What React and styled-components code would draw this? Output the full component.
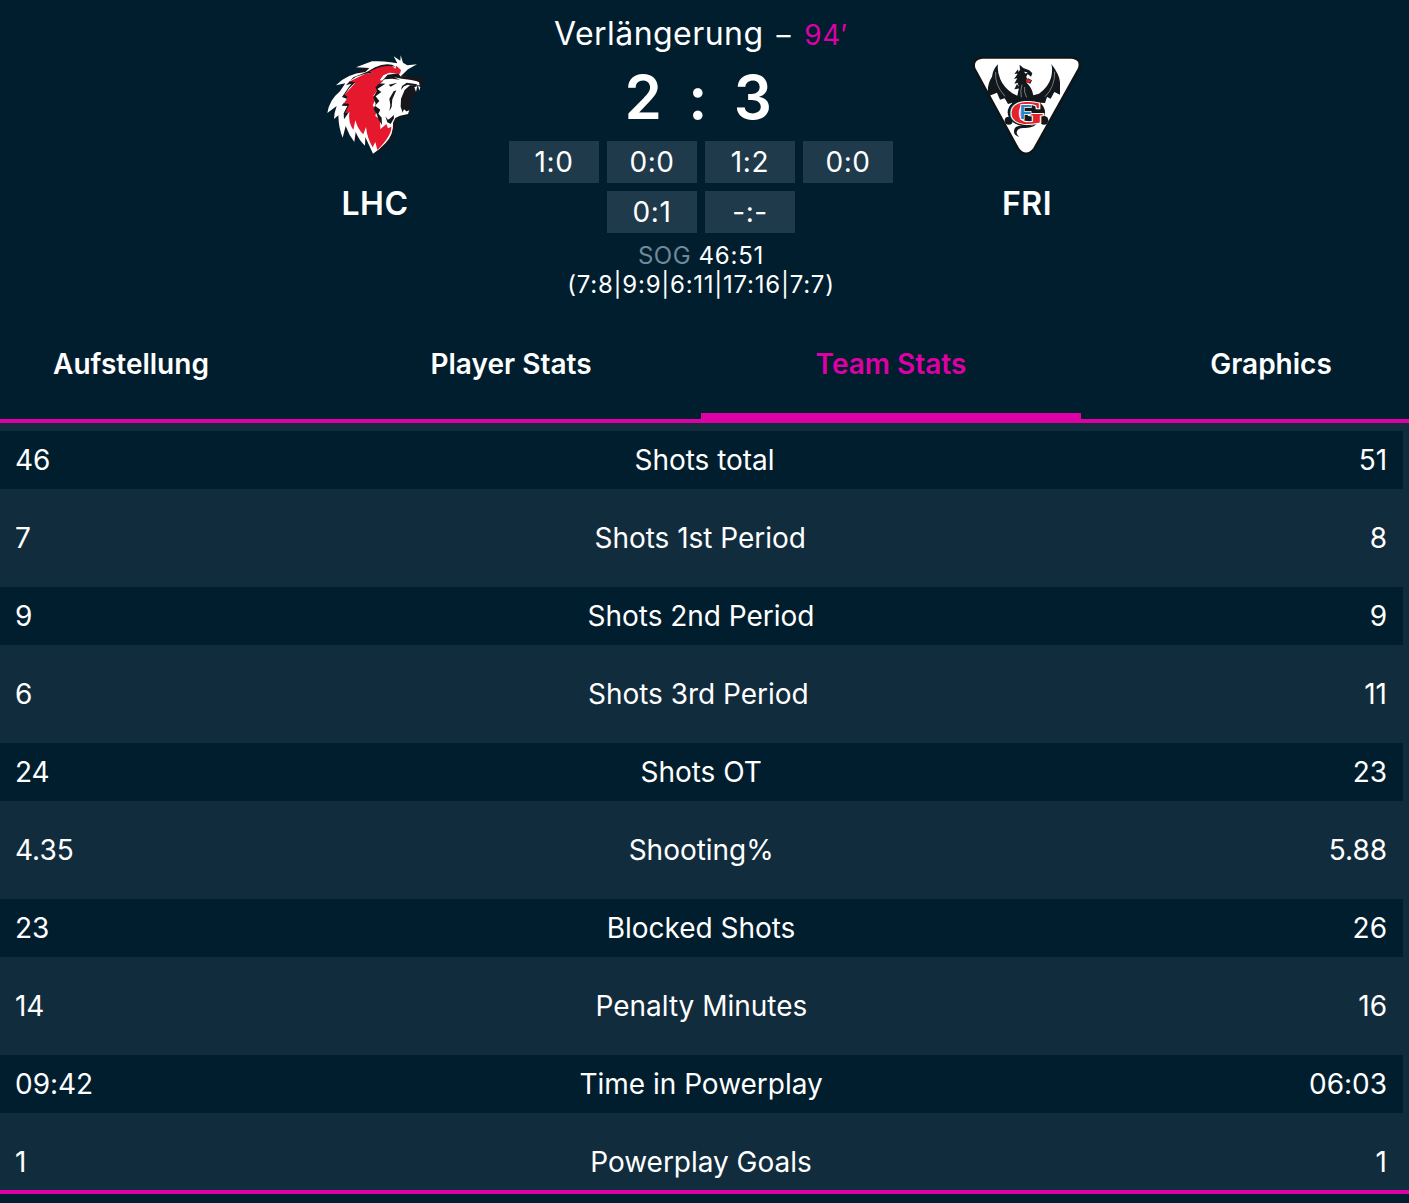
import React from "react";
import styled, { createGlobalStyle } from "styled-components";

const GlobalStyle = createGlobalStyle`
  * { box-sizing: border-box; }
  body { margin: 0; background: #001e2e; overflow: hidden; }
`;

const Page = styled.main`
  width: 1409px;
  height: 1203px;
  overflow: hidden;
  background: #001e2e;
  color: #fff;
  font-family: Inter, "Liberation Sans", sans-serif;
`;

const Header = styled.header`
  display: flex;
  justify-content: center;
  width: 1402px;
  height: 309px;
`;

const Team = styled.section`
  display: flex;
  flex-direction: column;
  align-items: center;
  width: 268px;
  padding-top: 50px;
`;

const Logo = styled.svg`
  display: block;
  flex: none;
  height: 110px;
`;

const TeamName = styled.h2`
  margin: 24px 0 0;
  font-size: 32px;
  font-weight: 600;
  line-height: 40px;
  letter-spacing: 0.5px;
`;

const Summary = styled.section`
  display: flex;
  flex-direction: column;
  align-items: center;
  width: 384px;
`;

const GameStatus = styled.div`
  margin-top: 14px;
  font-size: 32px;
  line-height: 40px;
  letter-spacing: 0.45px;
  white-space: pre;
`;

const Clock = styled.span`
  font-size: 28px;
  letter-spacing: 0.7px;
  word-spacing: 4.4px;
`;

const Minute = styled.span`
  color: #dd00a5;
`;

const Score = styled.div`
  margin-top: 6px;
  font-size: 60px;
  font-weight: 600;
  line-height: 72px;
  letter-spacing: 5.6px;
  white-space: pre;
`;

const Periods = styled.div`
  display: flex;
  flex-wrap: wrap;
  justify-content: center;
  gap: 8px;
  margin-top: 8px;
`;

const Period = styled.span`
  width: 90px;
  height: 42px;
  background: #1f3a4b;
  font-size: 28px;
  line-height: 42px;
  letter-spacing: 0.6px;
  text-align: center;
`;

const Sog = styled.div`
  margin-top: 8px;
  font-size: 24px;
  line-height: 29px;
  letter-spacing: 0.75px;
  text-align: center;
`;

const SogLabel = styled.span`
  color: #6f899b;
  letter-spacing: 0.5px;
`;

const Tabs = styled.nav`
  display: flex;
  justify-content: center;
  width: 1402px;
  height: 110px;
`;

const Tab = styled.button`
  flex: 0 0 380px;
  height: 110px;
  padding: 5px 0 0;
  border: 0;
  border-bottom: 6px solid ${(p) => (p.$active ? "#dd00a5" : "transparent")};
  background: none;
  color: ${(p) => (p.$active ? "#dd00a5" : "#fff")};
  font: 600 28px/34px Inter, "Liberation Sans", sans-serif;
`;

const Panel = styled.section`
  height: 775px;
  padding: 8px 6px 0 0;
  border: solid #dd00a5;
  border-width: 4px 0;
  background: #112c3d;
  overflow: hidden;
`;

const StatRow = styled.div`
  display: flex;
  justify-content: space-between;
  height: 58px;
  margin-bottom: 20px;
  padding: 0 16px 0 15px;
  background: ${(p) => (p.$dark ? "#001e2e" : "transparent")};
  font-size: 28px;
  line-height: 58px;
  letter-spacing: -0.02px;
`;

const periods = ["1:0", "0:0", "1:2", "0:0", "0:1", "-:-"];
const tabs = ["Aufstellung", "Player Stats", "Team Stats", "Graphics"];
const stats = [
  ["46", "Shots total", "51"],
  ["7", "Shots 1st Period", "8"],
  ["9", "Shots 2nd Period", "9"],
  ["6", "Shots 3rd Period", "11"],
  ["24", "Shots OT", "23"],
  ["4.35", "Shooting%", "5.88"],
  ["23", "Blocked Shots", "26"],
  ["14", "Penalty Minutes", "16"],
  ["09:42", "Time in Powerplay", "06:03"],
  ["1", "Powerplay Goals", "1"],
];

function LionLogo() {
  return (
    <Logo width="110" viewBox="0 0 330 330" aria-label="Lausanne HC">
      <path
        fill="#17171b"
        d="M126 54 L190 42 L230 44 L252 64 L262 78 L302 82 L312 90 L308 104 L290 120 L274 152 L273 184 L262 197 L232 210 L226 240 L208 276 L184 302 L161 312 L140 268 L138 290 L112 252 L107 277 L82 235 L71 263 L54 200 L44 208 L56 160 L90 96 Z"
      />
      <path
        fill="#fff"
        d="M108 52 L156 34 Q184 32 212 37 L232 40 L221 19 L241 32 L242 16 L249 38 L262 46 L291 43 L264 58 L246 75 L240 80 L268 81 L297 96 L299 106 L270 106 L254 120 L243 146 L242 170 L248 188 L268 181 L264 192 L240 197 L226 204 L219 218 Q222 252 196 280 Q180 298 159 311 L136 261 L135 287 Q118 272 107 246 L103 276 Q87 256 77 228 L68 263 Q56 236 55 196 L42 207 Q42 190 50 168 L22 189 Q28 150 60 124 L76 100 L48 106 Q78 72 136 66 L148 54 Z"
      />
      <path
        fill="#e5182d"
        d="M90 94 L134 72 L160 68 L144 64 L166 52 Q186 45 216 48 L226 56 L229 47 L243 60 L240 71 L208 68 L190 76 L179 91 L190 92 L168 112 L173 120 L160 137 L167 147 L158 166 L170 182 L166 198 L180 208 L181 238 L199 222 L204 235 L214 230 Q215 257 172 300 L166 276 L158 292 Q142 266 138 231 L130 253 Q114 239 106 211 L100 240 Q84 218 88 186 L74 192 L86 164 L68 165 L84 142 L70 138 L94 112 L106 98 L86 100 Z"
      />
      <g fill="#17171b">
        <path d="M166 52 Q190 39 216 44 L227 50 Q196 45 172 54 L148 65 L160 68 L132 72 L108 80 L88 94 L106 97 L88 114 L74 134 L84 142 L70 160 L88 162 L76 190 L87 186 L72 208 L71 190 L82 168 L65 167 L80 146 L66 141 L86 112 L94 101 L78 106 L100 82 L134 68 L148 62 Z" />
        <path d="M203 74 L235 70 L242 80 L262 79 L300 88 L301 96 L274 90 L246 86 L222 82 L240 89 L216 86 L194 88 L178 100 L196 101 L172 117 L184 126 L167 139 L178 153 L165 167 L181 179 L175 191 L185 203 L186 225 L176 209 L170 192 L161 177 L167 161 L160 142 L171 122 L166 112 L188 91 Z" />
        <path d="M206 104 L232 98 L212 110 Z M260 98 L292 103 L286 108 L264 104 L252 109 L243 120 L246 108 Z M208 146 L221 124 L229 121 L217 148 L215 170 L208 184 L211 165 Z M196 199 L204 209 L212 204 L221 195 L222 205 L212 222 L202 217 Z" />
      </g>
      <path fill="#fff" d="M283 112 L292 108 L288 126 Z M294 107 L301 111 L298 122 Z M252 178 L259 184 L254 191 L247 189 Z" />
    </Logo>
  );
}

function DragonLogo() {
  return (
    <Logo width="116" viewBox="-2 0 348 330" aria-label="Fribourg-Gottéron">
      <path
        fill="#fff"
        stroke="#111416"
        strokeWidth="7"
        d="M38 23 H304 Q338 26 328 56 L194 296 Q169 326 145 296 L14 56 Q6 27 38 23 Z"
      />
      <g fill="#11171b">
        <path d="M85 43 Q82 65 92 88 Q102 112 128 130 L143 137 L146 122 Q150 112 144 100 L142 84 L143 68 L151 60 L150 44 L161 54 L179 61 L188 70 L184 80 L174 72 L169 82 L187 91 L182 101 L169 97 Q187 112 191 136 L208 131 Q236 111 244 83 Q250 60 245 42 Q269 73 271 96 L271 134 L254 126 L243 146 L232 141 L226 159 L213 158 L218 176 L120 176 L129 158 L115 162 L105 145 L91 149 L82 128 L56 139 Q50 105 67 80 Q70 57 85 43 Z" />
        <path d="M148 45 Q153 60 171 62 L160 65 Z M145 58 L134 72 L147 70 Z M143 73 L133 87 L149 83 Z M142 86 L134 101 L153 96 Z M142 102 L134 118 L151 115 Z" />
        <circle cx="117" cy="212" r="12" />
        <circle cx="223" cy="211" r="13" />
        <ellipse cx="170" cy="187" rx="56" ry="42" />
        <path d="M202 217 Q196 235 164 234 Q142 233 141 248 Q142 256 149 260 Q132 257 133 243 Q134 230 150 227 Q160 224 179 228 Q194 230 194 217 Z" />
      </g>
      <path fill="none" stroke="#a9adb0" strokeWidth="2" d="M78 66 Q74 104 106 139 M255 65 Q256 111 226 140 M157 104 Q151 123 155 142 M165 111 Q162 127 171 142" />
      <path fill="#e52229" d="M170 86 L186 91 L178 99 L169 94 Z" />
      <path fill="#fff" d="M172 80 L177 83 L172 87 Z M163 65 L174 67 L168 71 Z" />
      <text
        transform="translate(171 221) scale(1.3 1)"
        textAnchor="middle"
        fontFamily="Liberation Serif, serif"
        fontWeight="700"
        fontSize="102"
        fill="#e52229"
        stroke="#fff"
        strokeWidth="6"
        paintOrder="stroke"
      >
        G
      </text>
      <text
        x="168"
        y="207"
        textAnchor="middle"
        fontFamily="Liberation Sans, sans-serif"
        fontWeight="700"
        fontSize="58"
        fill="#2785c5"
        stroke="#fff"
        strokeWidth="4"
        paintOrder="stroke"
      >
        F
      </text>
    </Logo>
  );
}

export default function App() {
  return (
    <Page>
      <GlobalStyle />
      <Header>
        <Team>
          <LionLogo />
          <TeamName>LHC</TeamName>
        </Team>
        <Summary>
          <GameStatus>
            Verlängerung<Clock> – <Minute>94′</Minute></Clock>
          </GameStatus>
          <Score>2 : 3</Score>
          <Periods>
            {periods.map((p, i) => <Period key={i}>{p}</Period>)}
          </Periods>
          <Sog>
            <div><SogLabel>SOG</SogLabel> 46:51</div>
            <div>(7:8|9:9|6:11|17:16|7:7)</div>
          </Sog>
        </Summary>
        <Team>
          <DragonLogo />
          <TeamName>FRI</TeamName>
        </Team>
      </Header>
      <Tabs>
        {tabs.map((t) => <Tab key={t} $active={t === "Team Stats"}>{t}</Tab>)}
      </Tabs>
      <Panel>
        {stats.map(([home, label, away], i) => (
          <StatRow key={label} $dark={i % 2 === 0}>
            <span>{home}</span>
            <span>{label}</span>
            <span>{away}</span>
          </StatRow>
        ))}
      </Panel>
    </Page>
  );
}
